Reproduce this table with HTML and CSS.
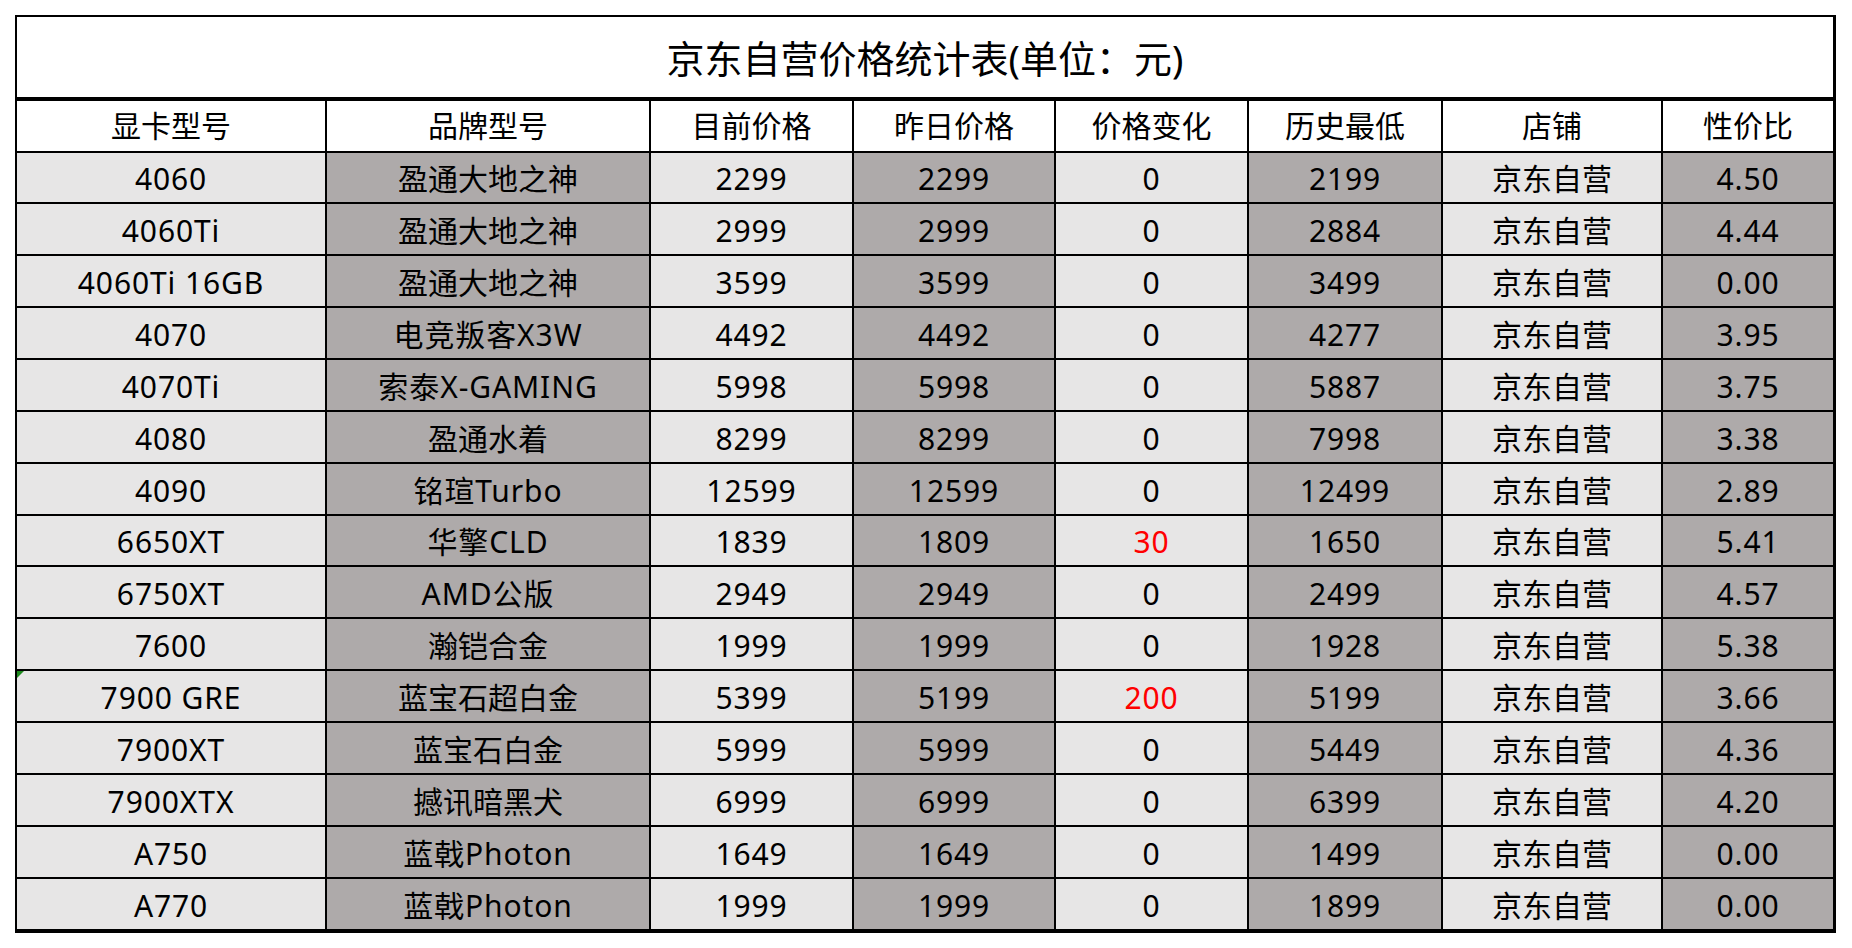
FILE: index.html
```html
<!DOCTYPE html>
<html lang="zh-CN">
<head>
<meta charset="utf-8">
<title>京东自营价格统计表</title>
<link rel="stylesheet" href="styles.css">
</head>
<body>
<div class="sheet">
  <div class="title">京东自营价格统计表(单位：元)</div>

  <div class="c hd">显卡型号</div><div class="c hd">品牌型号</div><div class="c hd">目前价格</div><div class="c hd">昨日价格</div><div class="c hd">价格变化</div><div class="c hd">历史最低</div><div class="c hd">店铺</div><div class="c hd">性价比</div>

  <div class="c l">4060</div><div class="c d k">盈通大地之神</div><div class="c l">2299</div><div class="c d">2299</div><div class="c l">0</div><div class="c d">2199</div><div class="c l k">京东自营</div><div class="c d">4.50</div>
  <div class="c l">4060Ti</div><div class="c d k">盈通大地之神</div><div class="c l">2999</div><div class="c d">2999</div><div class="c l">0</div><div class="c d">2884</div><div class="c l k">京东自营</div><div class="c d">4.44</div>
  <div class="c l">4060Ti 16GB</div><div class="c d k">盈通大地之神</div><div class="c l">3599</div><div class="c d">3599</div><div class="c l">0</div><div class="c d">3499</div><div class="c l k">京东自营</div><div class="c d">0.00</div>
  <div class="c l">4070</div><div class="c d">电竞叛客X3W</div><div class="c l">4492</div><div class="c d">4492</div><div class="c l">0</div><div class="c d">4277</div><div class="c l k">京东自营</div><div class="c d">3.95</div>
  <div class="c l">4070Ti</div><div class="c d">索泰X-GAMING</div><div class="c l">5998</div><div class="c d">5998</div><div class="c l">0</div><div class="c d">5887</div><div class="c l k">京东自营</div><div class="c d">3.75</div>
  <div class="c l">4080</div><div class="c d k">盈通水着</div><div class="c l">8299</div><div class="c d">8299</div><div class="c l">0</div><div class="c d">7998</div><div class="c l k">京东自营</div><div class="c d">3.38</div>
  <div class="c l">4090</div><div class="c d">铭瑄Turbo</div><div class="c l">12599</div><div class="c d">12599</div><div class="c l">0</div><div class="c d">12499</div><div class="c l k">京东自营</div><div class="c d">2.89</div>
  <div class="c l">6650XT</div><div class="c d">华擎CLD</div><div class="c l">1839</div><div class="c d">1809</div><div class="c l red">30</div><div class="c d">1650</div><div class="c l k">京东自营</div><div class="c d">5.41</div>
  <div class="c l">6750XT</div><div class="c d">AMD公版</div><div class="c l">2949</div><div class="c d">2949</div><div class="c l">0</div><div class="c d">2499</div><div class="c l k">京东自营</div><div class="c d">4.57</div>
  <div class="c l">7600</div><div class="c d k">瀚铠合金</div><div class="c l">1999</div><div class="c d">1999</div><div class="c l">0</div><div class="c d">1928</div><div class="c l k">京东自营</div><div class="c d">5.38</div>
  <div class="c l flag">7900 GRE</div><div class="c d k">蓝宝石超白金</div><div class="c l">5399</div><div class="c d">5199</div><div class="c l red">200</div><div class="c d">5199</div><div class="c l k">京东自营</div><div class="c d">3.66</div>
  <div class="c l">7900XT</div><div class="c d k">蓝宝石白金</div><div class="c l">5999</div><div class="c d">5999</div><div class="c l">0</div><div class="c d">5449</div><div class="c l k">京东自营</div><div class="c d">4.36</div>
  <div class="c l">7900XTX</div><div class="c d k">撼讯暗黑犬</div><div class="c l">6999</div><div class="c d">6999</div><div class="c l">0</div><div class="c d">6399</div><div class="c l k">京东自营</div><div class="c d">4.20</div>
  <div class="c l">A750</div><div class="c d">蓝戟Photon</div><div class="c l">1649</div><div class="c d">1649</div><div class="c l">0</div><div class="c d">1499</div><div class="c l k">京东自营</div><div class="c d">0.00</div>
  <div class="c l">A770</div><div class="c d">蓝戟Photon</div><div class="c l">1999</div><div class="c d">1999</div><div class="c l">0</div><div class="c d">1899</div><div class="c l k">京东自营</div><div class="c d">0.00</div>
</div>
</body>
</html>
```

FILE: styles.css
```css
html, body {
  margin: 0;
  padding: 0;
  background: #ffffff;
}

body {
  padding: 15px 0 0 15px;
  font-family: "Noto Sans", "Noto Sans CJK SC", sans-serif;
  color: #000000;
}

.sheet {
  display: grid;
  width: max-content;
  grid-template-columns: 308px 322px 201px 200px 191px 192px 218px 170px;
  grid-template-rows: 82px 50px 49px 50px 50px 50px 50px 50px 50px 49px 50px 50px 50px 50px 50px 50px 50px;
  gap: 2px;
  background: #000000;
  border-style: solid;
  border-color: #000000;
  border-width: 2px 3px 4px 2px;
}

.title {
  grid-column: 1 / -1;
  background: #ffffff;
  border-bottom: 2px solid #000000;
  display: flex;
  align-items: center;
  justify-content: center;
  font-size: 38px;
  line-height: 1;
  padding-top: 2px;
}

.c {
  display: flex;
  align-items: center;
  justify-content: center;
  font-size: 30px;
  line-height: 1;
  white-space: nowrap;
  padding-top: 3px;
  letter-spacing: 0.9px;
}

.hd {
  background: #ffffff;
  padding-top: 0;
  letter-spacing: 0;
}

.k {
  letter-spacing: 0;
}

.l {
  background: #e7e6e6;
}

.d {
  background: #aeaaaa;
}

.red {
  color: #ff0000;
}

.flag {
  position: relative;
}

.flag::before {
  content: "";
  position: absolute;
  left: 0;
  top: 0;
  width: 0;
  height: 0;
  border-top: 7px solid #1e8a1e;
  border-right: 7px solid transparent;
}
```
